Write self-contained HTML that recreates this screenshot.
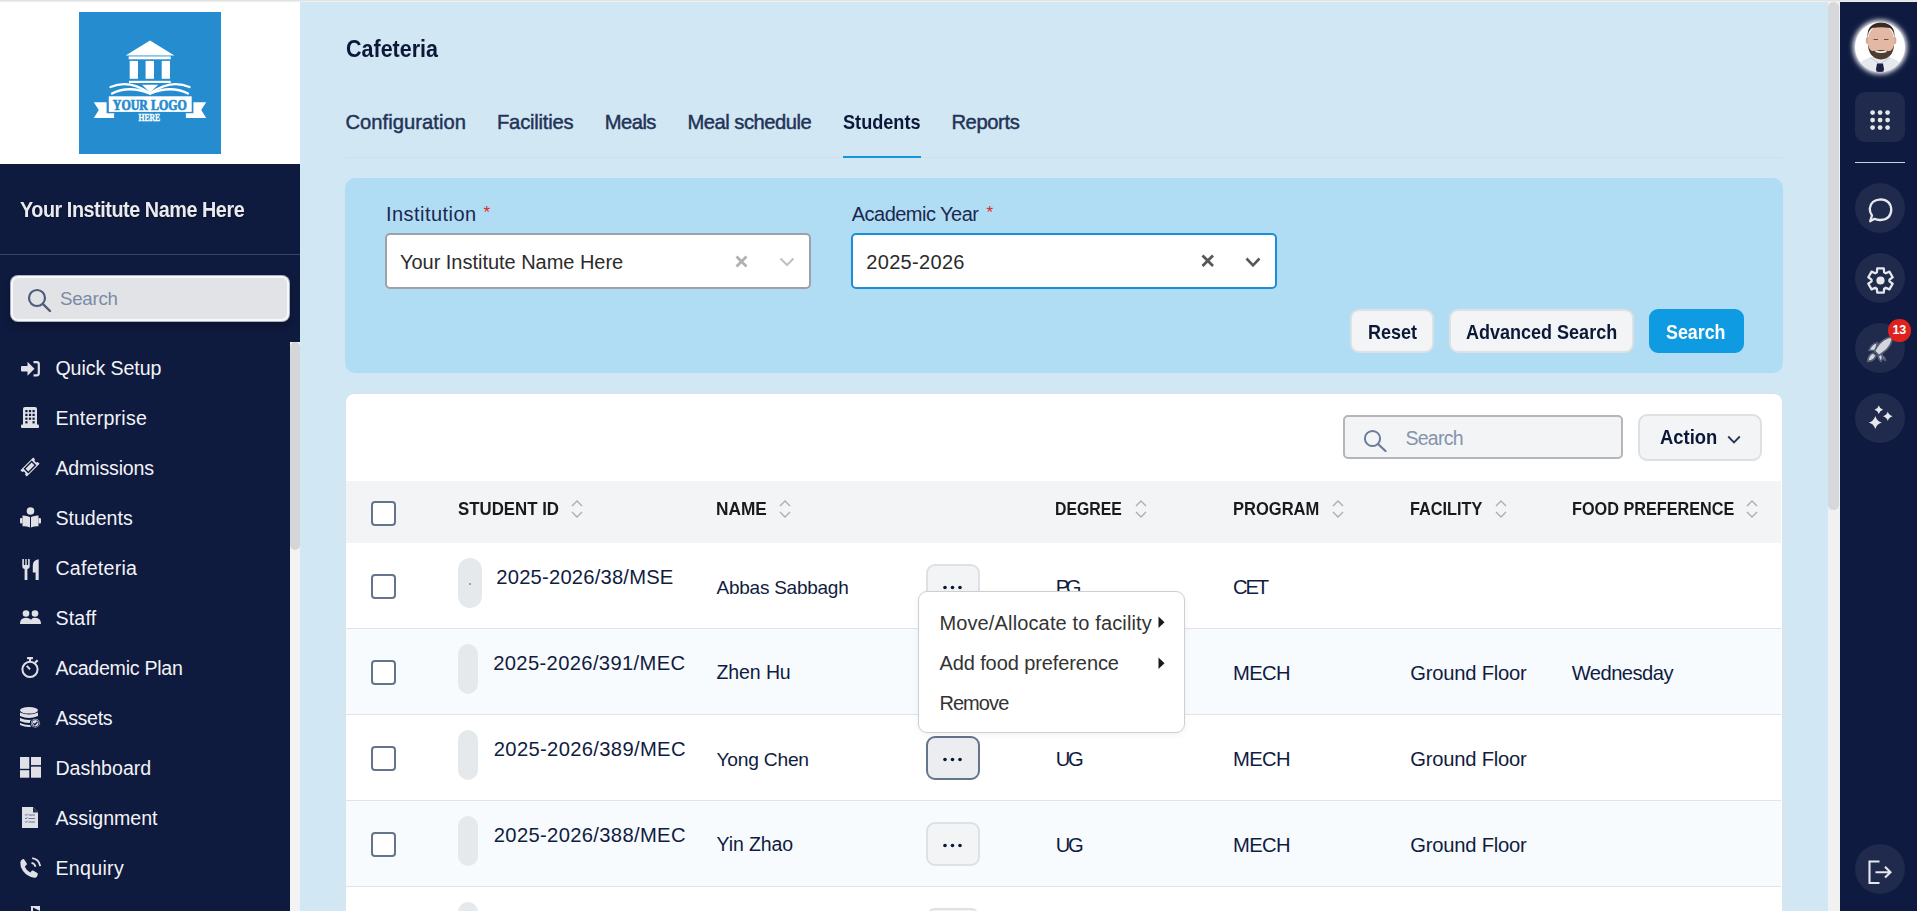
<!DOCTYPE html>
<html><head><meta charset="utf-8"><title>Cafeteria</title>
<style>
html,body{margin:0;padding:0}
body{width:1917px;height:911px;overflow:hidden;position:relative;background:#d2e7f4;font-family:"Liberation Sans",sans-serif}
.t{position:absolute;line-height:1;white-space:nowrap}
</style></head><body>
<div style="position:absolute;left:0;top:0;width:1917px;height:1px;background:#e2e2e2"></div><div style="position:absolute;left:0;top:1px;width:1917px;height:1px;background:#efefef"></div>
<div style="position:absolute;left:0;top:2px;width:300px;height:162px;background:#fff"></div>
<div style="position:absolute;left:0;top:164px;width:300px;height:747px;background:#0f1a3f"></div>
<svg style="position:absolute;left:79px;top:12px" width="142" height="142" viewBox="0 0 142 142">
<rect width="142" height="142" fill="#258ccf"/>
<g fill="#fff">
<polygon points="71,28.6 46.6,43.6 95.4,43.6"/>
<rect x="49.7" y="44.4" width="42" height="2.9"/>
<rect x="50.7" y="48.9" width="8.3" height="17.9"/>
<rect x="66.6" y="48.9" width="8.4" height="17.9"/>
<rect x="82.7" y="48.9" width="8.3" height="17.9"/>
<rect x="50" y="68.8" width="41.7" height="2.2"/>
<polygon points="63,72.7 79.2,72.7 71,80.5"/>
</g>
<g fill="none" stroke="#fff" stroke-width="2.4" stroke-linecap="round">
<path d="M31.5 75 Q50 67 70.5 81"/>
<path d="M110.5 75 Q92 67 71.5 81"/>
<path d="M33 81.5 Q50 73 70.5 81.5"/>
<path d="M109 81.5 Q92 73 71.5 81.5"/>
</g>
<g fill="#fff">
<polygon points="14.8,90.2 27.6,90.2 27.6,101.2 35.1,101.2 35.1,105.9 14.8,105.9 19.8,98"/>
<polygon points="127.2,90.2 114.4,90.2 114.4,101.2 106.9,101.2 106.9,105.9 127.2,105.9 122.2,98"/>
<rect x="29.8" y="84.3" width="82.9" height="15.6"/>
</g>
<text x="33.8" y="97.7" textLength="74" lengthAdjust="spacingAndGlyphs" font-family="Liberation Serif" font-weight="bold" font-size="13.8" fill="#258ccf" stroke="#258ccf" stroke-width="0.7">YOUR LOGO</text>
<text x="59.6" y="109" textLength="21.6" lengthAdjust="spacingAndGlyphs" font-family="Liberation Serif" font-weight="bold" font-size="10.4" fill="#fff" stroke="#fff" stroke-width="0.35">HERE</text>
</svg>
<div class="t" style="left:19.80px;top:198.85px;font-size:22.5px;letter-spacing:-0.515px;font-weight:bold;color:#e9ebef;transform:scaleX(0.8800);transform-origin:0 0;text-shadow:0 1px 2px rgba(0,0,0,.5);">Your Institute Name Here</div>
<div style="position:absolute;left:0;top:254px;width:300px;height:1px;background:#35446b"></div>
<div style="position:absolute;left:11px;top:276px;width:274px;height:41px;background:#e1e3e7;border:2px solid #f7f8fa;border-radius:7px;box-shadow:0 0 0 1px #a9b1c2, 0 4px 8px rgba(0,0,0,.35)"></div>
<svg style="position:absolute;left:27px;top:288px" width="25" height="25" viewBox="0 0 25 25"><circle cx="10" cy="10" r="8" fill="none" stroke="#4e5d7a" stroke-width="2.2"/><line x1="15.8" y1="15.8" x2="23" y2="23" stroke="#4e5d7a" stroke-width="2.4" stroke-linecap="round"/></svg>
<div class="t" style="left:60.00px;top:290.13px;font-size:18.75px;letter-spacing:-0.287px;font-weight:normal;color:#7c8ba4;">Search</div>
<div class="t" style="left:55.40px;top:358.81px;font-size:19.6px;letter-spacing:-0.072px;font-weight:normal;color:#f2f3f6;">Quick Setup</div>
<div class="t" style="left:55.40px;top:408.81px;font-size:19.6px;letter-spacing:0.247px;font-weight:normal;color:#f2f3f6;">Enterprise</div>
<div class="t" style="left:55.40px;top:458.81px;font-size:19.6px;letter-spacing:-0.162px;font-weight:normal;color:#f2f3f6;">Admissions</div>
<div class="t" style="left:55.40px;top:508.81px;font-size:19.6px;letter-spacing:-0.003px;font-weight:normal;color:#f2f3f6;">Students</div>
<div class="t" style="left:55.40px;top:558.81px;font-size:19.6px;letter-spacing:0.253px;font-weight:normal;color:#f2f3f6;">Cafeteria</div>
<div class="t" style="left:55.40px;top:608.81px;font-size:19.6px;letter-spacing:0.229px;font-weight:normal;color:#f2f3f6;">Staff</div>
<div class="t" style="left:55.40px;top:658.81px;font-size:19.6px;letter-spacing:-0.269px;font-weight:normal;color:#f2f3f6;">Academic Plan</div>
<div class="t" style="left:55.40px;top:708.81px;font-size:19.6px;letter-spacing:-0.320px;font-weight:normal;color:#f2f3f6;">Assets</div>
<div class="t" style="left:55.40px;top:758.81px;font-size:19.6px;letter-spacing:-0.006px;font-weight:normal;color:#f2f3f6;">Dashboard</div>
<div class="t" style="left:55.40px;top:808.81px;font-size:19.6px;letter-spacing:-0.023px;font-weight:normal;color:#f2f3f6;">Assignment</div>
<div class="t" style="left:55.40px;top:858.81px;font-size:19.6px;letter-spacing:0.309px;font-weight:normal;color:#f2f3f6;">Enquiry</div>
<svg style="position:absolute;left:20.5px;top:361px" width="19" height="15.5" viewBox="0 0 19 15.5"><g fill="#dfe1e6"><rect x="0" y="5" width="7.5" height="5.5" rx="1"/><polygon points="6.5,0.8 13.5,7.75 6.5,14.7"/></g><path d="M12.5 1.2 h3.3 a2 2 0 0 1 2 2 v9.1 a2 2 0 0 1 -2 2 h-3.3" fill="none" stroke="#dfe1e6" stroke-width="2.2"/></svg>
<svg style="position:absolute;left:21px;top:407px" width="18" height="21" viewBox="0 0 18 21"><path fill="#dfe1e6" d="M2 2 Q2 0 4 0 H14 Q16 0 16 2 V18 H2 Z"/><rect x="0" y="17.5" width="18" height="3.5" rx="1" fill="#dfe1e6"/><g fill="#0f1a3f"><rect x="4.3" y="3" width="2.2" height="2.2"/><rect x="7.9" y="3" width="2.2" height="2.2"/><rect x="11.5" y="3" width="2.2" height="2.2"/><rect x="4.3" y="6.8" width="2.2" height="2.2"/><rect x="7.9" y="6.8" width="2.2" height="2.2"/><rect x="11.5" y="6.8" width="2.2" height="2.2"/><rect x="4.3" y="10.6" width="2.2" height="2.2"/><rect x="7.9" y="10.6" width="2.2" height="2.2"/><rect x="11.5" y="10.6" width="2.2" height="2.2"/><rect x="4.3" y="14.2" width="2.2" height="2.2"/><rect x="11.5" y="14.2" width="2.2" height="2.2"/></g></svg>
<svg style="position:absolute;left:20px;top:457px" width="20" height="20" viewBox="0 0 20 20"><g transform="rotate(-45 10 10)"><path fill="#dfe1e6" d="M1 5.5 H19 V8 Q17.3 8.3 17.3 10 Q17.3 11.7 19 12 V14.5 H1 V12 Q2.7 11.7 2.7 10 Q2.7 8.3 1 8 Z"/><rect x="5" y="7.3" width="10" height="5.4" fill="none" stroke="#0f1a3f" stroke-width="1.4"/></g></svg>
<svg style="position:absolute;left:19.5px;top:506.5px" width="21" height="21" viewBox="0 0 21 21"><g fill="#dfe1e6"><circle cx="10.5" cy="4" r="3.8"/><path d="M2.5 8.5 Q6.5 8.3 10 10 V20.5 Q6.5 19 2.5 19.3 Z"/><path d="M18.5 8.5 Q14.5 8.3 11 10 V20.5 Q14.5 19 18.5 19.3 Z"/><rect x="0" y="11" width="2.5" height="5.5" rx="1"/><rect x="18.5" y="11" width="2.5" height="5.5" rx="1"/></g></svg>
<svg style="position:absolute;left:21.7px;top:558.6px" width="17" height="21" viewBox="0 0 17 21"><g fill="#dfe1e6"><path d="M0.3 0 H1.9 V6 H3.3 V0 H4.7 V6 H6.1 V0 H7.7 V7.5 Q7.7 9.5 5.4 10 V21 H2.6 V10 Q0.3 9.5 0.3 7.5 Z"/><path d="M16.7 0.2 V21 H13.6 V13.5 H10.8 V6.5 Q10.8 1 16.7 0.2 Z"/></g></svg>
<svg style="position:absolute;left:19.5px;top:610.3px" width="21" height="14" viewBox="0 0 21 14"><g fill="#dfe1e6"><circle cx="6" cy="3.5" r="3.3"/><circle cx="15" cy="3.5" r="3.3"/><path d="M0 14 Q0 7.8 6 7.8 Q12 7.8 12 14 Z"/><path d="M10.5 14 Q10.2 9 13 7.9 Q15 7.6 17 8 Q21 9 21 14 Z"/></g></svg>
<svg style="position:absolute;left:21px;top:656.5px" width="18.5" height="21" viewBox="0 0 18.5 21"><g fill="none" stroke="#dfe1e6" stroke-width="2"><circle cx="9" cy="12.3" r="7.6"/><line x1="9" y1="12.3" x2="5.8" y2="8.8"/></g><g fill="#dfe1e6"><rect x="6" y="0" width="6" height="2.2" rx="0.6"/><rect x="8" y="1.5" width="2" height="3"/><rect x="14.2" y="2.6" width="2.2" height="3.8" transform="rotate(45 15.3 4.5)"/></g></svg>
<svg style="position:absolute;left:20.2px;top:707px" width="20.5" height="21.5" viewBox="0 0 20.5 21.5"><g fill="#dfe1e6"><ellipse cx="9" cy="3.3" rx="9" ry="3.3"/><path d="M0 5.5 Q9 9.5 18 5.5 V9 Q9 13 0 9 Z"/><path d="M0 11 Q9 15 18 11 V14 Q9 18 0 14 Z"/><path d="M0 16 Q9 20 18 16 V18 Q9 22 0 18 Z"/></g><circle cx="15.3" cy="16.2" r="5" fill="#dfe1e6" stroke="#0f1a3f" stroke-width="1.2"/><circle cx="15.3" cy="16.2" r="3.6" fill="none" stroke="#34456c" stroke-width="1"/><path d="M13.4 16.3 L14.8 17.7 L17.4 15" fill="none" stroke="#0f1a3f" stroke-width="1.3"/></svg>
<svg style="position:absolute;left:19.5px;top:756.8px" width="21" height="21" viewBox="0 0 21 21"><g fill="#dfe1e6"><rect x="0" y="0" width="9.3" height="11.8"/><rect x="0" y="13.2" width="9.3" height="7.5"/><rect x="11" y="0" width="10" height="8.1"/><rect x="11" y="9.6" width="10" height="11.1"/></g></svg>
<svg style="position:absolute;left:21.7px;top:806.7px" width="16.5" height="21" viewBox="0 0 16.5 21"><path fill="#dfe1e6" d="M0 0 H11 L16.5 5.5 V21 H0 Z"/><path fill="#0f1a3f" d="M11 0 V5.5 H16.5 Z" opacity="0.9"/><g stroke="#5a6a8c" stroke-width="0.9" fill="none"><path d="M3 7.5 l1 1 l1.5 -1.8"/><path d="M3 11 l1 1 l1.5 -1.8"/><path d="M3 14.5 l1 1 l1.5 -1.8"/><line x1="6.5" y1="8" x2="13" y2="8"/><line x1="6.5" y1="11.5" x2="13" y2="11.5"/><line x1="6.5" y1="15" x2="13" y2="15"/></g></svg>
<svg style="position:absolute;left:19.9px;top:856.7px" width="21" height="21" viewBox="0 0 21 21"><path fill="#dfe1e6" d="M4.2 2.5 L6.8 6.6 Q7.2 7.5 6.3 8.2 L4.8 9.3 Q6.3 13.5 10.4 15.4 L11.5 14 Q12.2 13.1 13.1 13.6 L17.3 16 Q18.2 16.6 17.8 17.6 L17 19.4 Q16.2 21 14.3 20.8 Q7.5 19.8 3 14 Q0 9.8 0.3 5.5 Q0.5 3.7 2.2 2.6 L3 2.1 Q3.8 1.7 4.2 2.5 Z"/><g fill="none" stroke="#dfe1e6" stroke-width="1.8"><path d="M11.5 5.8 Q14.8 6.4 15.5 9.8"/><path d="M12.2 1.2 Q19 2.2 20.2 9.2"/></g></svg>
<div style="position:absolute;left:30px;top:906px;width:0;height:0;border-left:10px solid transparent;border-top:5px solid #dfe1e6"></div>
<div style="position:absolute;left:31px;top:905.5px;width:2px;height:6px;background:#dfe1e6"></div>
<div style="position:absolute;left:290px;top:342px;width:10px;height:569px;background:#f3f3f3"></div>
<div style="position:absolute;left:290px;top:342px;width:10px;height:208px;background:#d4d6da;border-radius:5px"></div>
<div class="t" style="left:345.50px;top:37.30px;font-size:23.75px;font-weight:bold;color:#0c1838;transform:scaleX(0.9049);transform-origin:0 0;">Cafeteria</div>
<div class="t" style="left:345.50px;top:112.30px;font-size:20.2px;letter-spacing:0.026px;font-weight:normal;color:#233357;-webkit-text-stroke:0.45px #233357;">Configuration</div>
<div class="t" style="left:497.00px;top:112.30px;font-size:20.2px;letter-spacing:-0.209px;font-weight:normal;color:#233357;-webkit-text-stroke:0.45px #233357;">Facilities</div>
<div class="t" style="left:604.80px;top:112.30px;font-size:20.2px;letter-spacing:-0.558px;font-weight:normal;color:#233357;-webkit-text-stroke:0.45px #233357;">Meals</div>
<div class="t" style="left:687.40px;top:112.30px;font-size:20.2px;letter-spacing:-0.482px;font-weight:normal;color:#233357;-webkit-text-stroke:0.45px #233357;">Meal schedule</div>
<div class="t" style="left:842.80px;top:112.05px;font-size:20.5px;font-weight:bold;color:#0c1838;transform:scaleX(0.8844);transform-origin:0 0;">Students</div>
<div class="t" style="left:951.40px;top:112.30px;font-size:20.2px;letter-spacing:-0.383px;font-weight:normal;color:#233357;-webkit-text-stroke:0.45px #233357;">Reports</div>
<div style="position:absolute;left:345px;top:157px;width:1438px;height:1px;background:#d3dde4"></div>
<div style="position:absolute;left:843px;top:155.5px;width:78px;height:2.5px;background:#1595dc"></div>
<div style="position:absolute;left:345px;top:178px;width:1438px;height:195px;background:#b0ddf4;border-radius:10px"></div>
<div class="t" style="left:386.00px;top:204.17px;font-size:20px;letter-spacing:0.460px;font-weight:normal;color:#1c2850;">Institution</div>
<div class="t" style="left:483.5px;top:204px;font-size:17px;color:#e0262b;line-height:1">*</div>
<div class="t" style="left:851.70px;top:203.57px;font-size:20px;letter-spacing:-0.508px;font-weight:normal;color:#1c2850;">Academic Year</div>
<div class="t" style="left:986.5px;top:203.5px;font-size:17px;color:#e0262b;line-height:1">*</div>
<div style="position:absolute;left:385px;top:233px;width:422px;height:52px;background:#fff;border:2px solid #9ca1ab;border-radius:5px"></div>
<div class="t" style="left:400.00px;top:252.27px;font-size:20px;letter-spacing:-0.026px;font-weight:normal;color:#2b2b2b;">Your Institute Name Here</div>
<svg style="position:absolute;left:735px;top:254.5px" width="13" height="13" viewBox="0 0 13 13"><path d="M1.5 1.5 L11.5 11.5 M11.5 1.5 L1.5 11.5" stroke="#b0b0b0" stroke-width="2.8"/></svg>
<svg style="position:absolute;left:778.5px;top:256.5px" width="16" height="10" viewBox="0 0 16 10"><path d="M1.5 1.5 L8 8 L14.5 1.5" fill="none" stroke="#c2c2c2" stroke-width="2.2"/></svg>
<div style="position:absolute;left:851px;top:233px;width:422px;height:52px;background:#fff;border:2px solid #1a8fd8;border-radius:5px"></div>
<div class="t" style="left:866.30px;top:251.67px;font-size:20px;letter-spacing:0.313px;font-weight:normal;color:#2b2b2b;">2025-2026</div>
<svg style="position:absolute;left:1201px;top:254px" width="13.5" height="13.5" viewBox="0 0 13.5 13.5"><path d="M1.5 1.5 L12 12 M12 1.5 L1.5 12" stroke="#575757" stroke-width="2.8"/></svg>
<svg style="position:absolute;left:1244.5px;top:256.5px" width="16" height="10.5" viewBox="0 0 16 10.5"><path d="M1.5 1.5 L8 8.3 L14.5 1.5" fill="none" stroke="#575757" stroke-width="2.6"/></svg>
<div style="position:absolute;left:1350px;top:309px;width:84px;height:44px;background:#f3f4f6;border:2px solid #dde0e4;border-radius:9px;box-sizing:border-box"></div>
<div class="t" style="left:1368.30px;top:321.12px;font-size:21.0px;font-weight:bold;color:#0c1838;transform:scaleX(0.8563);transform-origin:0 0;">Reset</div>
<div style="position:absolute;left:1449px;top:309px;width:185px;height:44px;background:#f3f4f6;border:2px solid #dde0e4;border-radius:9px;box-sizing:border-box"></div>
<div class="t" style="left:1466.00px;top:321.12px;font-size:21.0px;font-weight:bold;color:#0c1838;transform:scaleX(0.8577);transform-origin:0 0;">Advanced Search</div>
<div style="position:absolute;left:1648.5px;top:309px;width:95px;height:44px;background:#0f9be1;border:2px solid #0f9be1;border-radius:9px;box-sizing:border-box"></div>
<div class="t" style="left:1666.40px;top:321.12px;font-size:21.0px;font-weight:bold;color:#ffffff;transform:scaleX(0.8496);transform-origin:0 0;">Search</div>
<div style="position:absolute;left:345px;top:393px;width:1435.5px;height:600px;background:#fff;border:1px solid #dfe1e4;border-radius:9px"></div>
<div style="position:absolute;left:1343px;top:415px;width:276px;height:40px;background:#f3f4f6;border:2px solid #b4b6ba;border-radius:5px"></div>
<svg style="position:absolute;left:1363px;top:428.5px" width="24" height="23" viewBox="0 0 24 23"><circle cx="9.5" cy="9.5" r="7.6" fill="none" stroke="#6b7c99" stroke-width="2"/><line x1="15" y1="15" x2="22.5" y2="22" stroke="#6b7c99" stroke-width="2.2" stroke-linecap="round"/></svg>
<div class="t" style="left:1405.50px;top:429.29px;font-size:19.5px;letter-spacing:-0.743px;font-weight:normal;color:#8593ab;">Search</div>
<div style="position:absolute;left:1638px;top:414px;width:124px;height:47px;background:#f3f4f6;border:2px solid #dde0e4;border-radius:9px;box-sizing:border-box"></div>
<div class="t" style="left:1659.70px;top:426.85px;font-size:20.5px;font-weight:bold;color:#0c1838;transform:scaleX(0.8972);transform-origin:0 0;">Action</div>
<svg style="position:absolute;left:1727px;top:434.5px" width="14" height="9.5" viewBox="0 0 14 9.5"><path d="M1.2 1.5 L7 7.5 L12.8 1.5" fill="none" stroke="#283556" stroke-width="1.8"/></svg>
<div style="position:absolute;left:346px;top:481px;width:1435px;height:62px;background:#f3f4f6"></div>
<div style="position:absolute;left:371px;top:501px;width:25px;height:25px;box-sizing:border-box;border:2px solid #64748b;border-radius:4px;background:#fff"></div>
<div class="t" style="left:457.80px;top:500.45px;font-size:18.25px;font-weight:bold;color:#1a1a1a;transform:scaleX(0.9224);transform-origin:0 0;">STUDENT ID</div>
<svg style="position:absolute;left:570.5px;top:499.5px" width="12" height="18" viewBox="0 0 12 18"><path d="M1 6 L6 1 L11 6 M1 12 L6 17 L11 12" fill="none" stroke="#a9afb9" stroke-width="1.35"/></svg>
<div class="t" style="left:716.40px;top:500.45px;font-size:18.25px;font-weight:bold;color:#1a1a1a;transform:scaleX(0.9452);transform-origin:0 0;">NAME</div>
<svg style="position:absolute;left:779px;top:499.5px" width="12" height="18" viewBox="0 0 12 18"><path d="M1 6 L6 1 L11 6 M1 12 L6 17 L11 12" fill="none" stroke="#a9afb9" stroke-width="1.35"/></svg>
<div class="t" style="left:1055.40px;top:500.45px;font-size:18.25px;font-weight:bold;color:#1a1a1a;transform:scaleX(0.8676);transform-origin:0 0;">DEGREE</div>
<svg style="position:absolute;left:1134.5px;top:499.5px" width="12" height="18" viewBox="0 0 12 18"><path d="M1 6 L6 1 L11 6 M1 12 L6 17 L11 12" fill="none" stroke="#a9afb9" stroke-width="1.35"/></svg>
<div class="t" style="left:1233.00px;top:500.45px;font-size:18.25px;font-weight:bold;color:#1a1a1a;transform:scaleX(0.9048);transform-origin:0 0;">PROGRAM</div>
<svg style="position:absolute;left:1331.5px;top:499.5px" width="12" height="18" viewBox="0 0 12 18"><path d="M1 6 L6 1 L11 6 M1 12 L6 17 L11 12" fill="none" stroke="#a9afb9" stroke-width="1.35"/></svg>
<div class="t" style="left:1410.20px;top:500.45px;font-size:18.25px;font-weight:bold;color:#1a1a1a;transform:scaleX(0.8913);transform-origin:0 0;">FACILITY</div>
<svg style="position:absolute;left:1494.5px;top:499.5px" width="12" height="18" viewBox="0 0 12 18"><path d="M1 6 L6 1 L11 6 M1 12 L6 17 L11 12" fill="none" stroke="#a9afb9" stroke-width="1.35"/></svg>
<div class="t" style="left:1571.50px;top:500.45px;font-size:18.25px;font-weight:bold;color:#1a1a1a;transform:scaleX(0.8893);transform-origin:0 0;">FOOD PREFERENCE</div>
<svg style="position:absolute;left:1746px;top:499.5px" width="12" height="18" viewBox="0 0 12 18"><path d="M1 6 L6 1 L11 6 M1 12 L6 17 L11 12" fill="none" stroke="#a9afb9" stroke-width="1.35"/></svg>
<div style="position:absolute;left:346px;top:543px;width:1435px;height:85px;background:#ffffff;border-bottom:1px solid #dfe4ea"></div>
<div style="position:absolute;left:371px;top:574px;width:25px;height:25px;box-sizing:border-box;border:2px solid #64748b;border-radius:4px;background:#fff"></div>
<div style="position:absolute;left:458px;top:558px;width:24px;height:50px;background:#e6e9ec;border-radius:12px"></div>
<div style="position:absolute;left:469px;top:583px;width:1.5px;height:2px;background:#9aa3ad"></div>
<div class="t" style="left:496.30px;top:566.70px;font-size:20.2px;letter-spacing:0.205px;font-weight:normal;color:#101c40;">2025-2026/38/MSE</div>
<div class="t" style="left:716.50px;top:577.92px;font-size:19.0px;letter-spacing:-0.249px;font-weight:normal;color:#101c40;">Abbas Sabbagh</div>
<div class="t" style="left:1055.80px;top:576.90px;font-size:20.2px;letter-spacing:-3.589px;font-weight:normal;color:#101c40;">PG</div>
<div class="t" style="left:1233.10px;top:576.90px;font-size:20.2px;letter-spacing:-2.250px;font-weight:normal;color:#101c40;">CET</div>
<div style="position:absolute;left:926px;top:564px;width:54px;height:44px;box-sizing:border-box;background:#f3f4f6;border:2px solid #dde0e4;border-radius:9px"></div>
<svg style="position:absolute;left:942px;top:584.7px" width="22" height="5" viewBox="0 0 22 5"><g fill="#0c1838"><circle cx="3" cy="2.5" r="1.8"/><circle cx="10.5" cy="2.5" r="1.8"/><circle cx="18" cy="2.5" r="1.8"/></g></svg>
<div style="position:absolute;left:346px;top:629px;width:1435px;height:85px;background:#f7fbfe;border-bottom:1px solid #dfe4ea"></div>
<div style="position:absolute;left:371px;top:660px;width:25px;height:25px;box-sizing:border-box;border:2px solid #64748b;border-radius:4px;background:#fff"></div>
<div style="position:absolute;left:458px;top:644px;width:20px;height:50px;background:#e6e9ec;border-radius:12px"></div>
<div class="t" style="left:493.20px;top:652.70px;font-size:20.2px;letter-spacing:0.353px;font-weight:normal;color:#101c40;">2025-2026/391/MEC</div>
<div class="t" style="left:716.50px;top:663.49px;font-size:19.5px;letter-spacing:-0.097px;font-weight:normal;color:#101c40;">Zhen Hu</div>
<div class="t" style="left:1233.10px;top:662.90px;font-size:20.2px;letter-spacing:-0.663px;font-weight:normal;color:#101c40;">MECH</div>
<div class="t" style="left:1410.20px;top:662.90px;font-size:20.2px;letter-spacing:-0.207px;font-weight:normal;color:#101c40;">Ground Floor</div>
<div class="t" style="left:1571.70px;top:662.90px;font-size:20.2px;letter-spacing:-0.557px;font-weight:normal;color:#101c40;">Wednesday</div>
<div style="position:absolute;left:926px;top:650px;width:54px;height:44px;box-sizing:border-box;background:#f3f4f6;border:2px solid #dde0e4;border-radius:9px"></div>
<svg style="position:absolute;left:942px;top:670.7px" width="22" height="5" viewBox="0 0 22 5"><g fill="#0c1838"><circle cx="3" cy="2.5" r="1.8"/><circle cx="10.5" cy="2.5" r="1.8"/><circle cx="18" cy="2.5" r="1.8"/></g></svg>
<div style="position:absolute;left:346px;top:715px;width:1435px;height:85px;background:#ffffff;border-bottom:1px solid #dfe4ea"></div>
<div style="position:absolute;left:371px;top:746px;width:25px;height:25px;box-sizing:border-box;border:2px solid #64748b;border-radius:4px;background:#fff"></div>
<div style="position:absolute;left:458px;top:730px;width:20px;height:50px;background:#e6e9ec;border-radius:12px"></div>
<div class="t" style="left:493.80px;top:738.70px;font-size:20.2px;letter-spacing:0.335px;font-weight:normal;color:#101c40;">2025-2026/389/MEC</div>
<div class="t" style="left:716.50px;top:749.70px;font-size:19.25px;letter-spacing:-0.252px;font-weight:normal;color:#101c40;">Yong Chen</div>
<div class="t" style="left:1055.80px;top:748.90px;font-size:20.2px;letter-spacing:-2.500px;font-weight:normal;color:#101c40;">UG</div>
<div class="t" style="left:1233.10px;top:748.90px;font-size:20.2px;letter-spacing:-0.663px;font-weight:normal;color:#101c40;">MECH</div>
<div class="t" style="left:1410.20px;top:748.90px;font-size:20.2px;letter-spacing:-0.207px;font-weight:normal;color:#101c40;">Ground Floor</div>
<div style="position:absolute;left:926px;top:736px;width:54px;height:44px;box-sizing:border-box;background:#ebedf0;border:2px solid #64748b;border-radius:9px"></div>
<svg style="position:absolute;left:942px;top:756.7px" width="22" height="5" viewBox="0 0 22 5"><g fill="#0c1838"><circle cx="3" cy="2.5" r="1.8"/><circle cx="10.5" cy="2.5" r="1.8"/><circle cx="18" cy="2.5" r="1.8"/></g></svg>
<div style="position:absolute;left:346px;top:801px;width:1435px;height:85px;background:#f7fbfe;border-bottom:1px solid #dfe4ea"></div>
<div style="position:absolute;left:371px;top:832px;width:25px;height:25px;box-sizing:border-box;border:2px solid #64748b;border-radius:4px;background:#fff"></div>
<div style="position:absolute;left:458px;top:816px;width:20px;height:50px;background:#e6e9ec;border-radius:12px"></div>
<div class="t" style="left:493.80px;top:824.70px;font-size:20.2px;letter-spacing:0.335px;font-weight:normal;color:#101c40;">2025-2026/388/MEC</div>
<div class="t" style="left:716.50px;top:835.49px;font-size:19.5px;letter-spacing:-0.102px;font-weight:normal;color:#101c40;">Yin Zhao</div>
<div class="t" style="left:1055.80px;top:834.90px;font-size:20.2px;letter-spacing:-2.500px;font-weight:normal;color:#101c40;">UG</div>
<div class="t" style="left:1233.10px;top:834.90px;font-size:20.2px;letter-spacing:-0.663px;font-weight:normal;color:#101c40;">MECH</div>
<div class="t" style="left:1410.20px;top:834.90px;font-size:20.2px;letter-spacing:-0.207px;font-weight:normal;color:#101c40;">Ground Floor</div>
<div style="position:absolute;left:926px;top:822px;width:54px;height:44px;box-sizing:border-box;background:#f3f4f6;border:2px solid #dde0e4;border-radius:9px"></div>
<svg style="position:absolute;left:942px;top:842.7px" width="22" height="5" viewBox="0 0 22 5"><g fill="#0c1838"><circle cx="3" cy="2.5" r="1.8"/><circle cx="10.5" cy="2.5" r="1.8"/><circle cx="18" cy="2.5" r="1.8"/></g></svg>
<div style="position:absolute;left:346px;top:887px;width:1435px;height:85px;background:#ffffff;border-bottom:1px solid #dfe4ea"></div>
<div style="position:absolute;left:371px;top:918px;width:25px;height:25px;box-sizing:border-box;border:2px solid #64748b;border-radius:4px;background:#fff"></div>
<div style="position:absolute;left:458px;top:902px;width:20px;height:50px;background:#e6e9ec;border-radius:12px"></div>
<div style="position:absolute;left:926px;top:908px;width:54px;height:44px;box-sizing:border-box;background:#f3f4f6;border:2px solid #dde0e4;border-radius:9px"></div>
<svg style="position:absolute;left:942px;top:928.7px" width="22" height="5" viewBox="0 0 22 5"><g fill="#0c1838"><circle cx="3" cy="2.5" r="1.8"/><circle cx="10.5" cy="2.5" r="1.8"/><circle cx="18" cy="2.5" r="1.8"/></g></svg>
<div style="position:absolute;left:918px;top:591px;width:265px;height:139.5px;background:#fff;border:1px solid #cfcfcf;border-radius:9px;box-shadow:0 2px 6px rgba(0,0,0,.06)"></div>
<div class="t" style="left:939.40px;top:612.77px;font-size:20px;letter-spacing:0.142px;font-weight:normal;color:#333333;">Move/Allocate to facility</div>
<div class="t" style="left:939.40px;top:652.87px;font-size:20px;letter-spacing:-0.094px;font-weight:normal;color:#333333;">Add food preference</div>
<div class="t" style="left:939.40px;top:692.87px;font-size:20px;letter-spacing:-0.920px;font-weight:normal;color:#333333;">Remove</div>
<svg style="position:absolute;left:1157.5px;top:616px" width="7" height="12.5" viewBox="0 0 7 12.5"><path d="M0.5 0.5 L6.5 6.25 L0.5 12 Z" fill="#1a1a1a"/></svg>
<svg style="position:absolute;left:1157.5px;top:656.5px" width="7" height="12.5" viewBox="0 0 7 12.5"><path d="M0.5 0.5 L6.5 6.25 L0.5 12 Z" fill="#1a1a1a"/></svg>
<div style="position:absolute;left:1828px;top:2px;width:12px;height:909px;background:#f1f1f1"></div>
<div style="position:absolute;left:1828px;top:2px;width:11px;height:508px;background:#d6d8dc;border-radius:6px"></div>
<div style="position:absolute;left:1840px;top:2px;width:77px;height:909px;background:#0f1a40"></div>
<svg style="position:absolute;left:1845px;top:12px" width="70" height="70" viewBox="-5 -5 70 70">
<defs><filter id="gl" x="-40%" y="-40%" width="180%" height="180%"><feGaussianBlur stdDeviation="2.8"/></filter>
<clipPath id="cp"><circle cx="30" cy="30" r="25"/></clipPath></defs>
<circle cx="30" cy="30" r="27" fill="#ffffff" filter="url(#gl)"/>
<circle cx="30" cy="30" r="25" fill="#ffffff"/>
<g clip-path="url(#cp)">
<path d="M3 60 Q5 45 20 40.5 L30 38.5 L40 40.5 Q55 45 57 60 Z" fill="#e6e8ef"/>
<path d="M20 40.5 L30 47 L40 40.5" fill="none" stroke="#c3c7d2" stroke-width="1"/>
<path d="M27 46.5 L33 46.5 L34 52 L32.5 60 L27.5 60 L26 52 Z" fill="#1b2240"/>
<rect x="15.8" y="20" width="3.5" height="7" rx="1.7" fill="#d9a994"/>
<rect x="42.8" y="20" width="3.5" height="7" rx="1.7" fill="#d9a994"/>
<ellipse cx="31" cy="24.5" rx="13.2" ry="17" fill="#e3b9a6"/>
<path d="M17.8 27 Q18.5 41.5 31 42.5 Q43.5 41.5 44.2 27 Q42.5 35 38 34 Q31 32 24 34 Q19.5 35 17.8 27 Z" fill="#4e3c31"/>
<path d="M17.5 21 Q16.5 6 31 5.5 Q45.5 6 44.5 21 Q43.5 13 40 11 Q31 9.5 22 11 Q18.5 13 17.5 21 Z" fill="#3a2b22"/>
<path d="M25.5 34.2 Q31 36.2 36.5 34.2" stroke="#f4f4f4" stroke-width="1.8" fill="none"/>
<path d="M23.5 22.5 h4.5 M34 22.5 h4.5" stroke="#6a5044" stroke-width="1.2"/>
</g></svg>
<div style="position:absolute;left:1855px;top:92px;width:50px;height:50px;background:#1f2a4d;border-radius:10px"></div>
<svg style="position:absolute;left:1869.8px;top:109.8px" width="20.5" height="20.5" viewBox="0 0 20.5 20.5"><circle cx="2.6" cy="2.6" r="2.4" fill="#e4e6ea"/><circle cx="2.6" cy="10.1" r="2.4" fill="#e4e6ea"/><circle cx="2.6" cy="17.6" r="2.4" fill="#e4e6ea"/><circle cx="10.1" cy="2.6" r="2.4" fill="#e4e6ea"/><circle cx="10.1" cy="10.1" r="2.4" fill="#e4e6ea"/><circle cx="10.1" cy="17.6" r="2.4" fill="#e4e6ea"/><circle cx="17.6" cy="2.6" r="2.4" fill="#e4e6ea"/><circle cx="17.6" cy="10.1" r="2.4" fill="#e4e6ea"/><circle cx="17.6" cy="17.6" r="2.4" fill="#e4e6ea"/></svg>
<div style="position:absolute;left:1855px;top:161.7px;width:50px;height:1.6px;background:#cfd2d8"></div>
<div style="position:absolute;left:1855px;top:183px;width:50px;height:50px;background:#1f2a4d;border-radius:50%"></div>
<div style="position:absolute;left:1855px;top:253px;width:50px;height:50px;background:#1f2a4d;border-radius:50%"></div>
<div style="position:absolute;left:1855px;top:323px;width:50px;height:50px;background:#1f2a4d;border-radius:50%"></div>
<div style="position:absolute;left:1855px;top:393px;width:50px;height:50px;background:#1f2a4d;border-radius:50%"></div>
<div style="position:absolute;left:1855px;top:844px;width:50px;height:50px;background:#1f2a4d;border-radius:50%"></div>
<svg style="position:absolute;left:1867px;top:197px" width="27" height="27" viewBox="0 0 27 27"><path d="M3.2 24.2 L5 18.5 Q2.5 15 2.8 11.5 Q3.5 3 13.5 2.3 Q23.5 2.5 24.3 12.5 Q24 22.5 13.5 23 Q10 23.2 7.5 21.8 Z" fill="none" stroke="#e6e8ec" stroke-width="2.3" stroke-linejoin="round"/></svg>
<svg style="position:absolute;left:1866.5px;top:267px" width="27" height="27" viewBox="0 0 27 27"><polygon points="9.84,5.28 10.24,1.33 16.76,1.33 17.16,5.28 18.79,6.22 22.41,4.59 25.67,10.24 22.45,12.56 22.45,14.44 25.67,16.76 22.41,22.41 18.79,20.78 17.16,21.72 16.76,25.67 10.24,25.67 9.84,21.72 8.21,20.78 4.59,22.41 1.33,16.76 4.55,14.44 4.55,12.56 1.33,10.24 4.59,4.59 8.21,6.22" fill="none" stroke="#e6e8ec" stroke-width="2.3" stroke-linejoin="round"/><circle cx="13.5" cy="13.5" r="4.1" fill="#e6e8ec"/></svg>
<svg style="position:absolute;left:1866px;top:334px" width="28" height="30" viewBox="0 0 28 30"><g fill="#d3d6dd" stroke="#56607a" stroke-width="1.6" stroke-linejoin="round"><path d="M11.5 8.5 Q5.5 9.5 3 16.5 L9.5 16.5 Z"/><path d="M13 22 Q19 21 19.5 26.5 L13 22 Z"/><path d="M14.5 17.5 Q18 23 15 27.5 Q11.5 24 12 19 Z"/><path d="M26.5 3 Q17 3.5 10.5 13.5 L8.5 17 L13 21.5 L16.5 19 Q26 12.5 26.5 3 Z"/><path d="M7.5 19 Q2.5 20 1.5 27.5 Q9 27 10 21.5 Z"/></g></svg>
<div style="position:absolute;left:1888px;top:319px;width:22.5px;height:22.5px;background:#e0221f;border-radius:50%"></div>
<div class="t" style="left:1888px;top:324px;width:22.5px;text-align:center;font-size:12.5px;font-weight:bold;color:#fff;letter-spacing:-0.3px">13</div>
<svg style="position:absolute;left:1866px;top:404px" width="28" height="28" viewBox="0 0 28 28"><g fill="#e6e8ec"><path d="M9.3 11.9 Q10.752 17.048000000000002 15.9 18.5 Q10.752 19.951999999999998 9.3 25.1 Q7.848000000000001 19.951999999999998 2.700000000000001 18.5 Q7.848000000000001 17.048000000000002 9.3 11.9 Z"/><path d="M21.8 7.500000000000001 Q22.856 11.244 26.6 12.3 Q22.856 13.356000000000002 21.8 17.1 Q20.744 13.356000000000002 17.0 12.3 Q20.744 11.244 21.8 7.500000000000001 Z"/><path d="M12.8 1.5 Q13.746 4.854 17.1 5.8 Q13.746 6.7459999999999996 12.8 10.1 Q11.854000000000001 6.7459999999999996 8.5 5.8 Q11.854000000000001 4.854 12.8 1.5 Z"/></g></svg>
<svg style="position:absolute;left:1868px;top:859.5px" width="25" height="25" viewBox="0 0 25 25"><path d="M11.5 1.5 H1.5 V23 H11.5" fill="none" stroke="#e6e8ec" stroke-width="2.1"/><path d="M7.5 12.2 H22.5 M17 6.8 L22.5 12.2 L17 17.6" fill="none" stroke="#e6e8ec" stroke-width="2.1"/></svg>
</body></html>
